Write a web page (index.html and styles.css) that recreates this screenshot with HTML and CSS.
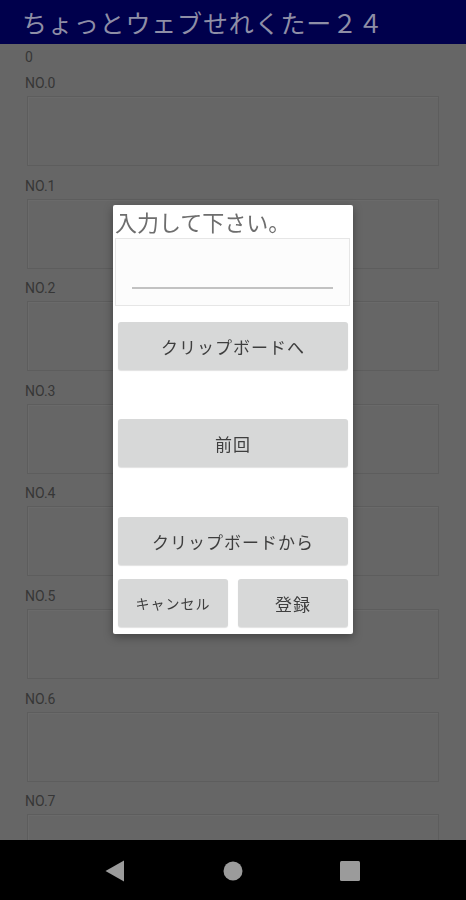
FILE: index.html
```html
<!DOCTYPE html>
<html lang="ja">
<head>
    <meta charset="UTF-8">
    <meta name="viewport" content="width=device-width, initial-scale=1.0">
    <title>ちょっとウェブせれくたー２４</title>
    <link rel="stylesheet" href="styles.css">
</head>
<body>

    <div class="screen">
        <header class="appbar">
            <h1>ちょっとウェブせれくたー２４</h1>
        </header>

        <main class="lista">
            <div class="contador">0</div>
            <div class="item"><div class="rotulo">NO.0</div><div class="caixa"></div></div>
            <div class="item"><div class="rotulo">NO.1</div><div class="caixa"></div></div>
            <div class="item"><div class="rotulo">NO.2</div><div class="caixa"></div></div>
            <div class="item"><div class="rotulo">NO.3</div><div class="caixa"></div></div>
            <div class="item"><div class="rotulo">NO.4</div><div class="caixa"></div></div>
            <div class="item"><div class="rotulo">NO.5</div><div class="caixa"></div></div>
            <div class="item"><div class="rotulo">NO.6</div><div class="caixa"></div></div>
            <div class="item"><div class="rotulo">NO.7</div><div class="caixa"></div></div>
        </main>

        <nav class="navbar">
            <svg width="20" height="22" viewBox="0 0 20 22"><path d="M19 0.5 L19 21.5 L0.5 11 Z" fill="#9b9b9b"/></svg>
            <svg width="20" height="20" viewBox="0 0 20 20"><circle cx="10" cy="10" r="9.5" fill="#9b9b9b"/></svg>
            <svg width="20" height="20" viewBox="0 0 20 20"><rect x="0" y="0" width="20" height="20" rx="1.5" fill="#9b9b9b"/></svg>
        </nav>
    </div>

    <!-- diálogo de entrada -->
    <div class="dialogo">
        <div class="dialogo-titulo">入力して下さい。</div>
        <div class="entrada"><div class="linha"></div></div>
        <button class="botao botao-1">クリップボードへ</button>
        <button class="botao botao-2">前回</button>
        <button class="botao botao-3">クリップボードから</button>
        <div class="linha-botoes">
            <button class="botao botao-pequeno">キャンセル</button>
            <button class="botao">登録</button>
        </div>
    </div>

</body>
</html>
```

FILE: styles.css
```css
/* tela escurecida atrás do diálogo */
body {
    margin: 0;
    background-color: #666;
    font-family: Roboto, "Noto Sans CJK JP", sans-serif;
}
.screen {
    height: 100vh;
    display: flex;
    flex-direction: column;
    overflow: hidden;
}
.appbar {
    height: 44px;
    flex-shrink: 0;
    background-color: #00004c;
    display: flex;
    align-items: center;
    padding-left: 22px;
}
.appbar h1 {
    margin: 0;
    font-family: "Noto Sans CJK JP", sans-serif;
    font-weight: 400;
    font-size: 25px;
    line-height: 30px;
    color: #8e8ea6;
    letter-spacing: 0.85px;
}
.lista {
    flex: 1;
    overflow: hidden;
    padding: 3px 27px 0 25px;
    color: #363636;
    font-size: 14px;
}
.contador { line-height: 20px; margin-bottom: 6px; }
.item { margin-bottom: 9.6px; }
.rotulo { line-height: 20px; margin-bottom: 3px; }
.caixa {
    height: 68px;
    margin-left: 2px;
    border: 1px solid #5d5d5d;
    box-shadow: inset 1px 1px 0 #6a6a6a;
}
.navbar {
    height: 59px;
    flex-shrink: 0;
    background-color: #000;
    display: flex;
    align-items: center;
    padding-top: 1px;
}
.navbar svg:nth-child(1) { margin-left: 105px; }
.navbar svg:nth-child(2) { margin-left: 98px; }
.navbar svg:nth-child(3) { margin-left: 97px; }

.dialogo {
    position: fixed;
    left: 113px;
    top: 205px;
    width: 240px;
    box-sizing: border-box;
    padding: 0 5px 7px 2px;
    background-color: #fff;
    border-radius: 2px;
    box-shadow: 0 3px 10px rgba(0, 0, 0, 0.35);
    display: flex;
    flex-direction: column;
    font-family: "Noto Sans CJK JP", sans-serif;
}
.dialogo-titulo {
    font-size: 22px;
    line-height: 33px;
    color: #6e6e6e;
    white-space: nowrap;
}
.entrada {
    height: 66px;
    margin-right: -2px;
    border: 1px solid #e6e6e6;
    background-color: #fcfcfc;
    position: relative;
}
.linha {
    position: absolute;
    left: 16px;
    right: 16px;
    top: 48px;
    height: 2px;
    background-color: #c2c2c2;
}
.botao {
    height: 48px;
    margin-left: 3px;
    border: none;
    border-radius: 3px;
    background-color: #d7d8d8;
    color: #3e3e3e;
    font-family: "Noto Sans CJK JP", sans-serif;
    font-size: 17px;
    letter-spacing: 1px;
    padding: 0;
    box-shadow: 0 1px 1px rgba(0, 0, 0, 0.12);
}
.botao-1 { margin-top: 16px; }
.botao-2 { margin-top: 49px; }
.botao-3 { margin-top: 50px; }
.linha-botoes {
    display: flex;
    gap: 10px;
    margin-top: 14px;
    margin-left: 3px;
}
.linha-botoes .botao { flex: 1; margin-left: 0; }
.botao-pequeno { font-size: 14px; letter-spacing: 1px; }
```
